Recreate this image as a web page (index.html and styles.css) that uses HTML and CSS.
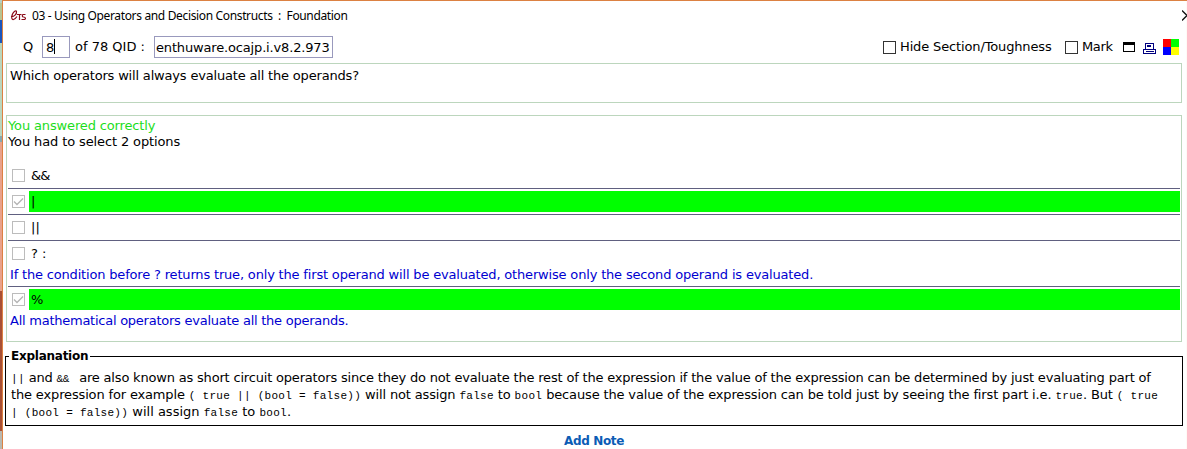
FILE: index.html
```
<!DOCTYPE html>
<html lang="en">
<head>
<meta charset="utf-8">
<title>Foundation</title>
<link rel="stylesheet" href="styles.css">
</head>
<body>
<div class="screen">
<div class="desktop-edge"></div>
<main class="window">
  <header class="titlebar">
    <svg class="logo" width="17" height="12" viewBox="0 0 17 12" fill="none" stroke="#8b0a18" stroke-width="1.2"><path d="M1 6.500C4 7 7 4 6.500 1.500C6 0 3.500 1.500 2.300 4.500C1 8 2 9.800 3.500 9.500C5 9 6 8 7 6.500M7 4.500H11.500M9.500 4.500V10M15.500 4.500H13C12 5 12 6.800 13.500 7C16 7 16 9.500 14 9.500H11.500"/></svg>
    <span class="title">03 - Using Operators and Decision Constructs&nbsp; :&nbsp; Foundation</span>
    <svg class="close" width="5" height="11" viewBox="0 0 5 11" fill="none" stroke="#111" stroke-width="1.3"><path d="M0 .5L5 5.500L0 10.500"/></svg>
  </header>
  <div class="toolbar">
    <span class="q">Q</span>
    <span class="field number">8<i class="caret"></i></span>
    <span class="count">of 78 QID :</span>
    <span class="field qid">enthuware.ocajp.i.v8.2.973</span>
    <span class="spacer"></span>
    <span class="box dark"></span><span class="hide">Hide Section/Toughness</span>
    <span class="box dark"></span><span class="mark">Mark</span>
    <svg class="win-icon" width="12" height="10" viewBox="0 0 12 10" shape-rendering="crispEdges"><path fill="#000" d="M0 0H12V10H0ZM1 3V9H11V3Z" fill-rule="evenodd"/></svg>
    <svg class="print-icon" width="13" height="11" viewBox="0 0 13 11" shape-rendering="crispEdges"><path fill="#000080" fill-rule="evenodd" d="M2 0H11V6H13V11H0V6H2ZM3 1V6H10V1ZM1 7V10H12V7ZM4 2H8V4H4ZM3 8H11V9H3Z"/></svg>
    <svg class="color-icon" width="16" height="16" shape-rendering="crispEdges"><path fill="#f00" d="M0 0H8V8H0Z"/><path fill="#0f0" d="M8 0H16V8H8Z"/><path fill="#00f" d="M0 8H8V16H0Z"/><path fill="#ff0" d="M8 8H16V16H8Z"/></svg>
  </div>
  <section class="question"><span class="question-text">Which operators will always evaluate all the operands?</span></section>
  <section class="answers">
    <div class="result">You answered correctly</div>
    <div class="select">You had to select 2 options</div>
    <div class="option first"><span class="box"></span><span class="answer">&amp;&amp;</span></div>
    <div class="option ruled"><span class="box"><svg width="11" height="11" viewBox="0 0 11 11"><path class="tick" d="M1 5.500L4 8.500L10 2.500"/></svg></span><span class="answer right">|</span></div>
    <div class="option ruled"><span class="box"></span><span class="answer">||</span></div>
    <div class="option ruled"><span class="box"></span><span class="answer">? :</span></div>
    <div class="note condition">If the condition before ? returns true, only the first operand will be evaluated, otherwise only the second operand is evaluated.</div>
    <div class="option ruled"><span class="box"><svg width="11" height="11" viewBox="0 0 11 11"><path class="tick" d="M1 5.500L4 8.500L10 2.500"/></svg></span><span class="answer right">%</span></div>
    <div class="note">All mathematical operators evaluate all the operands.</div>
  </section>
  <fieldset class="explanation">
    <legend>Explanation</legend>
    <p class="line1"><code>||</code> and <code class="tight">&amp;&amp; </code> are also known as short circuit operators since they do not evaluate the rest of the expression if the value of the expression can be determined by just evaluating part of</p>
    <p class="line2">the expression for example <code>( true || (bool = false))</code> will not assign <code>false</code> to <code>bool</code> because the value of the expression can be told just by seeing the first part i.e. <code>true</code>. But <code>( true</code></p>
    <p class="line3"><code>| (bool = false))</code> will assign <code>false</code> to <code>bool</code>.</p>
  </fieldset>
  <footer class="add-note">Add Note</footer>
</main>
<div class="right-edge"></div>
</div>
</body>
</html>
```
FILE: styles.css
```
* { box-sizing: border-box; }
body { margin: 0; background: #fff; color: #000; font: 13px/16px Verdana, "DejaVu Sans", sans-serif; overflow: hidden; }
.screen { display: flex; width: 1187px; height: 449px; }
.desktop-edge { width: 2px; flex: none; background: linear-gradient(#b5cec4 0 3px, #b8c390 3px 20px, #1b56bd 20px 43px, #bad6bd 43px 136px, #87a8ad 136px 142px, #e9a28a 142px 291px, #a85035 291px 431px, #b8b8b0 431px); }
.window { width: 1184px; flex: none; border-left: 1px solid #dc8142; border-top: 1px solid #dc8142; white-space: nowrap; }
.right-edge { width: 1px; border-top: 1px solid #dc8142; background: #fffaf6; }
.titlebar { display: flex; height: 30px; align-items: center; padding-left: 7px; }
.logo { margin-bottom: 1px; }
.title { font: 12px/16px "Segoe UI", "Noto Sans", sans-serif; margin-left: 5px; letter-spacing: -.35px; }
.close { margin: 0 -1px 2px auto; position: relative; z-index: 1; }
.toolbar { display: flex; height: 32px; align-items: center; padding-left: 20px; }
.q { width: 19px; }
.field { height: 22px; border: 1px solid #9999bd; padding: 2px 2px; line-height: 17px; }
.number { width: 28px; display: flex; padding-left: 3px; }
.caret { width: 1px; height: 15px; background: #000; }
.count { margin-left: 5px; width: 79px; }
.qid { width: 179px; padding-left: 1px; letter-spacing: -.16px; }
.spacer { flex: 1; }
.box { width: 13px; height: 13px; flex: none; border: 1px solid #bcbcbc; background: #fff; }
.box svg { display: block; }
.dark { border-color: #333; }
.tick { fill: none; stroke: #b4b4b4; stroke-width: 1.3; }
.hide { width: 165px; margin-left: 4px; letter-spacing: -.14px; }
.mark { width: 41px; margin-left: 4px; letter-spacing: -.35px; }
.print-icon { margin-left: 8px; margin-top: 3px; }
.color-icon { margin: 0 7px; }
.question { width: 1176px; height: 40px; margin-left: 3px; border: 1px solid #bcd6bd; padding: 4px 3px; letter-spacing: -.18px; }
.answers { width: 1176px; height: 227px; margin: 12px 0 0 3px; border: 1px solid #bcd6bd; padding: 2px 1px 0; }
.result { color: #1ddd1d; letter-spacing: -.14px; }
.select { letter-spacing: -.12px; }
.option { display: flex; height: 26px; align-items: center; padding-left: 4px; }
.first { margin-top: 13px; height: 25px; letter-spacing: -1px; }
.ruled { border-top: 1px solid #606080; }
.answer { height: 21px; flex: 1; margin-left: 4px; padding-left: 2px; line-height: 21px; }
.right { background: #0f0; }
.note { color: #0000d0; padding: 1px 0 0 2px; height: 20px; line-height: 16px; letter-spacing: -.25px; }
.condition { letter-spacing: -.175px; }
.explanation { width: 1178px; height: 78px; margin: 6px 0 0 2px; border: 1px solid #000; padding: 5px 5px 0; min-width: 0; }
.explanation legend { font-weight: bold; font-size: 12px; line-height: 16px; padding: 0 2px; margin-left: -2px; letter-spacing: -.25px; }
p { margin: 0; line-height: 17px; height: 17px; }
.line1 { letter-spacing: -.185px; }
.line2 { letter-spacing: -.15px; }
code { font: 11px/12px "Liberation Mono", monospace; letter-spacing: .29px; white-space: pre; }
.tight { letter-spacing: -.4px; }
.add-note { height: 24px; padding: 7px 0 0 561px; color: #0b5cb5; font-weight: bold; font-size: 12px; letter-spacing: -.35px; }
```
